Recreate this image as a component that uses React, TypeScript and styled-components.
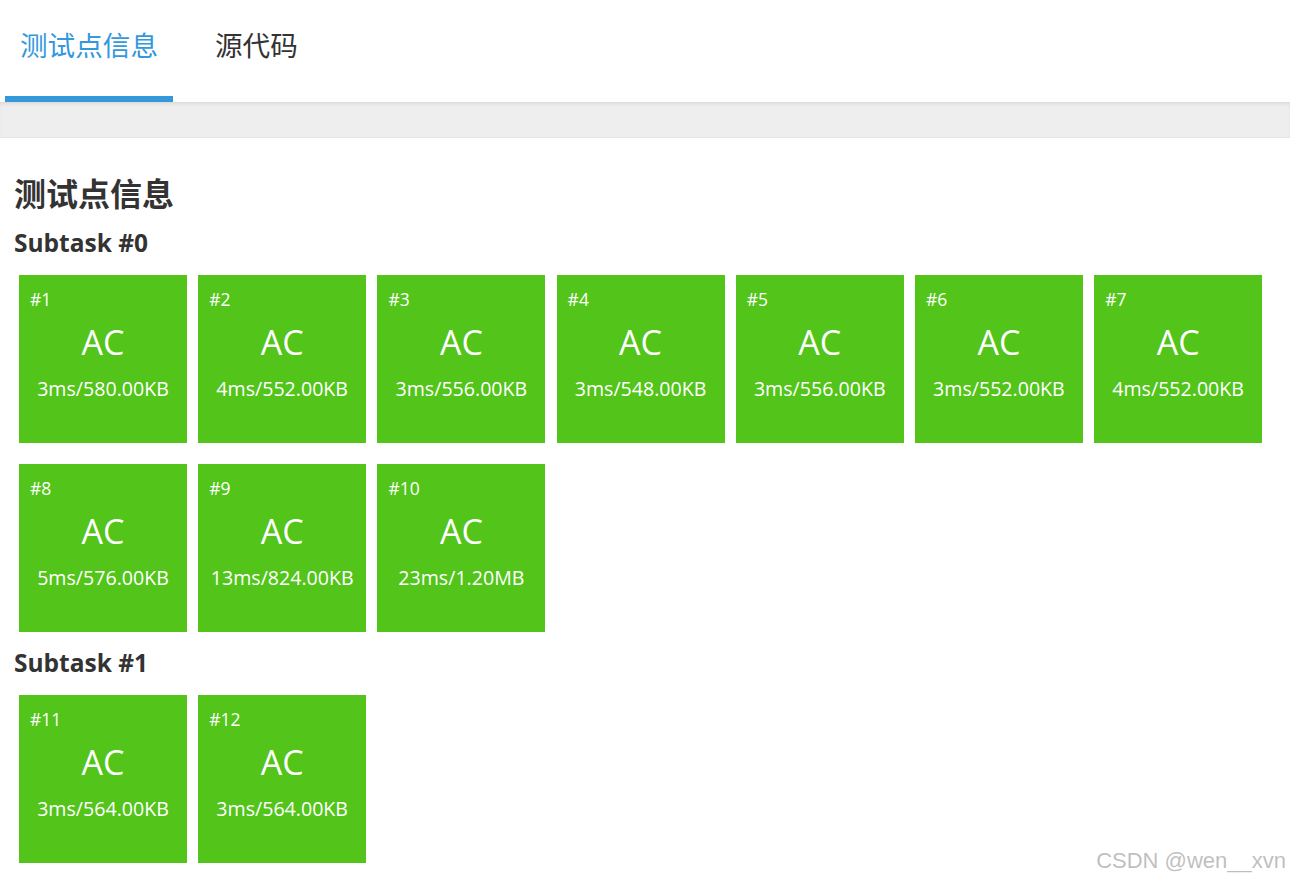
import styled, { createGlobalStyle } from "styled-components";

type Testcase = { id: number; time: string; memory: string };

const subtasks: { name: string; cases: Testcase[] }[] = [
  {
    name: "Subtask #0",
    cases: [
      { id: 1, time: "3ms", memory: "580.00KB" },
      { id: 2, time: "4ms", memory: "552.00KB" },
      { id: 3, time: "3ms", memory: "556.00KB" },
      { id: 4, time: "3ms", memory: "548.00KB" },
      { id: 5, time: "3ms", memory: "556.00KB" },
      { id: 6, time: "3ms", memory: "552.00KB" },
      { id: 7, time: "4ms", memory: "552.00KB" },
      { id: 8, time: "5ms", memory: "576.00KB" },
      { id: 9, time: "13ms", memory: "824.00KB" },
      { id: 10, time: "23ms", memory: "1.20MB" },
    ],
  },
  {
    name: "Subtask #1",
    cases: [
      { id: 11, time: "3ms", memory: "564.00KB" },
      { id: 12, time: "3ms", memory: "564.00KB" },
    ],
  },
];

const GlobalStyle = createGlobalStyle`
  html, body {
    margin: 0;
    padding: 0;
    background: #fff;
    font-family: "Open Sans", "Noto Sans CJK SC", sans-serif;
    color: #333;
  }
`;

export default function App() {
  return (
    <Page>
      <GlobalStyle />
      <TabBar>
        <Tab active>测试点信息</Tab>
        <Tab>源代码</Tab>
      </TabBar>
      <Band />
      <Content>
        <Title>测试点信息</Title>
        {subtasks.map((s) => (
          <section key={s.name}>
            <SubtaskName>{s.name}</SubtaskName>
            <Grid>
              {s.cases.map((c) => (
                <Card key={c.id}>
                  <CaseId>#{c.id}</CaseId>
                  <Status>AC</Status>
                  <Usage>
                    {c.time}/{c.memory}
                  </Usage>
                </Card>
              ))}
            </Grid>
          </section>
        ))}
      </Content>
      <Watermark>CSDN @wen__xvn</Watermark>
    </Page>
  );
}

const Page = styled.div`
  position: relative;
  width: 1290px;
  height: 882px;
  overflow: hidden;
`;

const TabBar = styled.div`
  display: flex;
  height: 102px;
  padding-left: 5px;
  box-sizing: border-box;
  background: #fff;
`;

const Tab = styled.div<{ active?: boolean }>`
  display: flex;
  align-items: flex-start;
  padding: 27px 15px 0 15px;
  margin-right: 27px;
  height: 102px;
  box-sizing: border-box;
  font-size: 27.6px;
  line-height: 36px;
  color: ${({ active }) => (active ? "#3498db" : "#333")};
  border-bottom: 6px solid
    ${({ active }) => (active ? "#3498db" : "transparent")};
  margin-bottom: -1px;
`;

const Band = styled.div`
  height: 35px;
  background: #eee;
  box-shadow: inset 0 3px 4px -2px rgba(0, 0, 0, 0.12);
  border-bottom: 1px solid #e4e4e4;
`;

const Content = styled.div`
  padding: 35px 14px 0 14px;
`;

const Title = styled.h2`
  margin: 0 0 13px 0;
  font-size: 32px;
  line-height: 42px;
  font-weight: 700;
  color: #333;
`;

const SubtaskName = styled.h3`
  margin: 0 0 17px 0;
  font-size: 24.5px;
  line-height: 30px;
  font-weight: 700;
  color: #333;
`;

const Grid = styled.div`
  display: flex;
  flex-wrap: wrap;
  gap: 21px 11.2px;
  padding-left: 5px;
  margin-bottom: 16px;
`;

const Card = styled.div`
  width: 168px;
  height: 168px;
  background: #52c41a;
  color: #fff;
  display: flex;
  flex-direction: column;
  align-items: center;
  box-sizing: border-box;
  padding-top: 12px;
`;

const CaseId = styled.div`
  align-self: flex-start;
  padding-left: 11px;
  font-size: 17.5px;
  line-height: 24px;
`;

const Status = styled.div`
  font-size: 34px;
  line-height: 44px;
  margin-top: 9px;
`;

const Usage = styled.div`
  font-size: 19.6px;
  line-height: 26px;
  margin-top: 12px;
`;

const Watermark = styled.div`
  position: absolute;
  right: 4px;
  bottom: 8px;
  font-family: "Liberation Sans", Arial, sans-serif;
  font-size: 22px;
  color: rgba(170, 170, 170, 0.75);
`;
